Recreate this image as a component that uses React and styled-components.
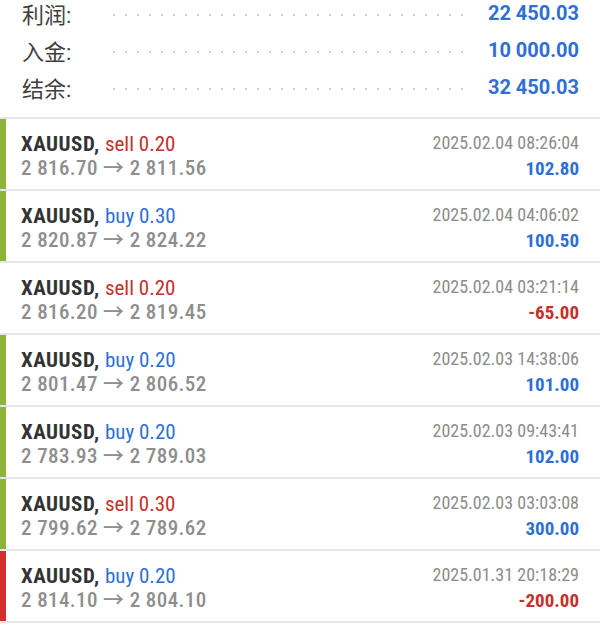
import React from 'react'
import styled, { createGlobalStyle } from 'styled-components'

const GlobalStyle = createGlobalStyle`
  html, body {
    margin: 0;
    padding: 0;
    background: #fff;
  }
  body {
    font-family: Roboto, "Noto Sans CJK SC", sans-serif;
    overflow: hidden;
  }
`

const summary = [
  { label: '利润:', value: '22 450.03' },
  { label: '入金:', value: '10 000.00' },
  { label: '结余:', value: '32 450.03' },
]

const trades = [
  { side: 'sell', lots: '0.20', open: '2 816.70', close: '2 811.56', time: '2025.02.04 08:26:04', profit: '102.80', bar: 'green' },
  { side: 'buy', lots: '0.30', open: '2 820.87', close: '2 824.22', time: '2025.02.04 04:06:02', profit: '100.50', bar: 'green' },
  { side: 'sell', lots: '0.20', open: '2 816.20', close: '2 819.45', time: '2025.02.04 03:21:14', profit: '-65.00', bar: 'none' },
  { side: 'buy', lots: '0.20', open: '2 801.47', close: '2 806.52', time: '2025.02.03 14:38:06', profit: '101.00', bar: 'green' },
  { side: 'buy', lots: '0.20', open: '2 783.93', close: '2 789.03', time: '2025.02.03 09:43:41', profit: '102.00', bar: 'green' },
  { side: 'sell', lots: '0.30', open: '2 799.62', close: '2 789.62', time: '2025.02.03 03:03:08', profit: '300.00', bar: 'green' },
  { side: 'buy', lots: '0.20', open: '2 814.10', close: '2 804.10', time: '2025.01.31 20:18:29', profit: '-200.00', bar: 'red' },
]

const barColors = { green: '#8ab43a', red: '#d3302c', none: 'transparent' }

export default function App() {
  return (
    <>
      <GlobalStyle />
      <Page>
        <Summary>
          {summary.map(item => (
            <SummaryRow key={item.label}>
              <Label>{item.label}</Label>
              <Leader />
              <Total>{item.value}</Total>
            </SummaryRow>
          ))}
        </Summary>
        {trades.map(t => (
          <Trade key={t.time}>
            <Bar color={barColors[t.bar]} />
            <Info>
              <Line>
                <Symbol>XAUUSD,</Symbol> <Side sell={t.side === 'sell'}>{t.side} {t.lots}</Side>
              </Line>
              <Prices>
                {t.open} → {t.close}
              </Prices>
            </Info>
            <Meta>
              <Time>{t.time}</Time>
              <Profit loss={t.profit.startsWith('-')}>{t.profit}</Profit>
            </Meta>
          </Trade>
        ))}
      </Page>
    </>
  )
}

const Page = styled.div`
  width: 600px;
  height: 627px;
  overflow: hidden;
  background: #fff;
`

const Summary = styled.div`
  margin-top: -6px;
  padding: 0 21px 12px 22px;
  border-bottom: 2px solid #e6e6e6;
`

const SummaryRow = styled.div`
  display: flex;
  align-items: center;
  height: 37px;
`

const Label = styled.div`
  width: 86px;
  font-size: 22px;
  color: #3e3e3e;
`

const Leader = styled.div`
  flex: 1;
  height: 4px;
  margin: 5px 20px 0 0;
  background-image: radial-gradient(circle, #d0d0d0 1px, transparent 1.4px);
  background-size: 12px 4px;
  background-repeat: repeat-x;
`

const Total = styled.div`
  font-size: 20px;
  font-weight: 700;
  color: #2f6fd4;
`

const Trade = styled.div`
  display: flex;
  height: 70px;
  border-bottom: 2px solid #e6e6e6;
`

const Bar = styled.div`
  width: 6px;
  background: ${p => p.color};
`

const Info = styled.div`
  flex: 1;
  padding: 13px 0 0 15px;
  font-size: 21px;
  line-height: 24px;
`

const Line = styled.div`
  color: #333;
`

const Symbol = styled.span`
  font-weight: 700;
  font-stretch: 85%;
  letter-spacing: 0.5px;
`

const Side = styled.span`
  font-stretch: 87%;
  color: ${p => (p.sell ? '#c4302b' : '#2f6fd4')};
`

const Prices = styled.div`
  color: #8e8e8e;
  font-weight: 500;
  font-stretch: 84%;
  letter-spacing: 0.4px;
`

const Meta = styled.div`
  display: flex;
  flex-direction: column;
  align-items: flex-end;
  padding: 11px 21px 0 0;
  line-height: 26px;
`

const Time = styled.div`
  font-size: 18px;
  color: #8c8c8c;
  font-stretch: 75%;
`

const Profit = styled.div`
  font-size: 19px;
  font-weight: 700;
  font-stretch: 75%;
  color: ${p => (p.loss ? '#c4302b' : '#2f6fd4')};
`
